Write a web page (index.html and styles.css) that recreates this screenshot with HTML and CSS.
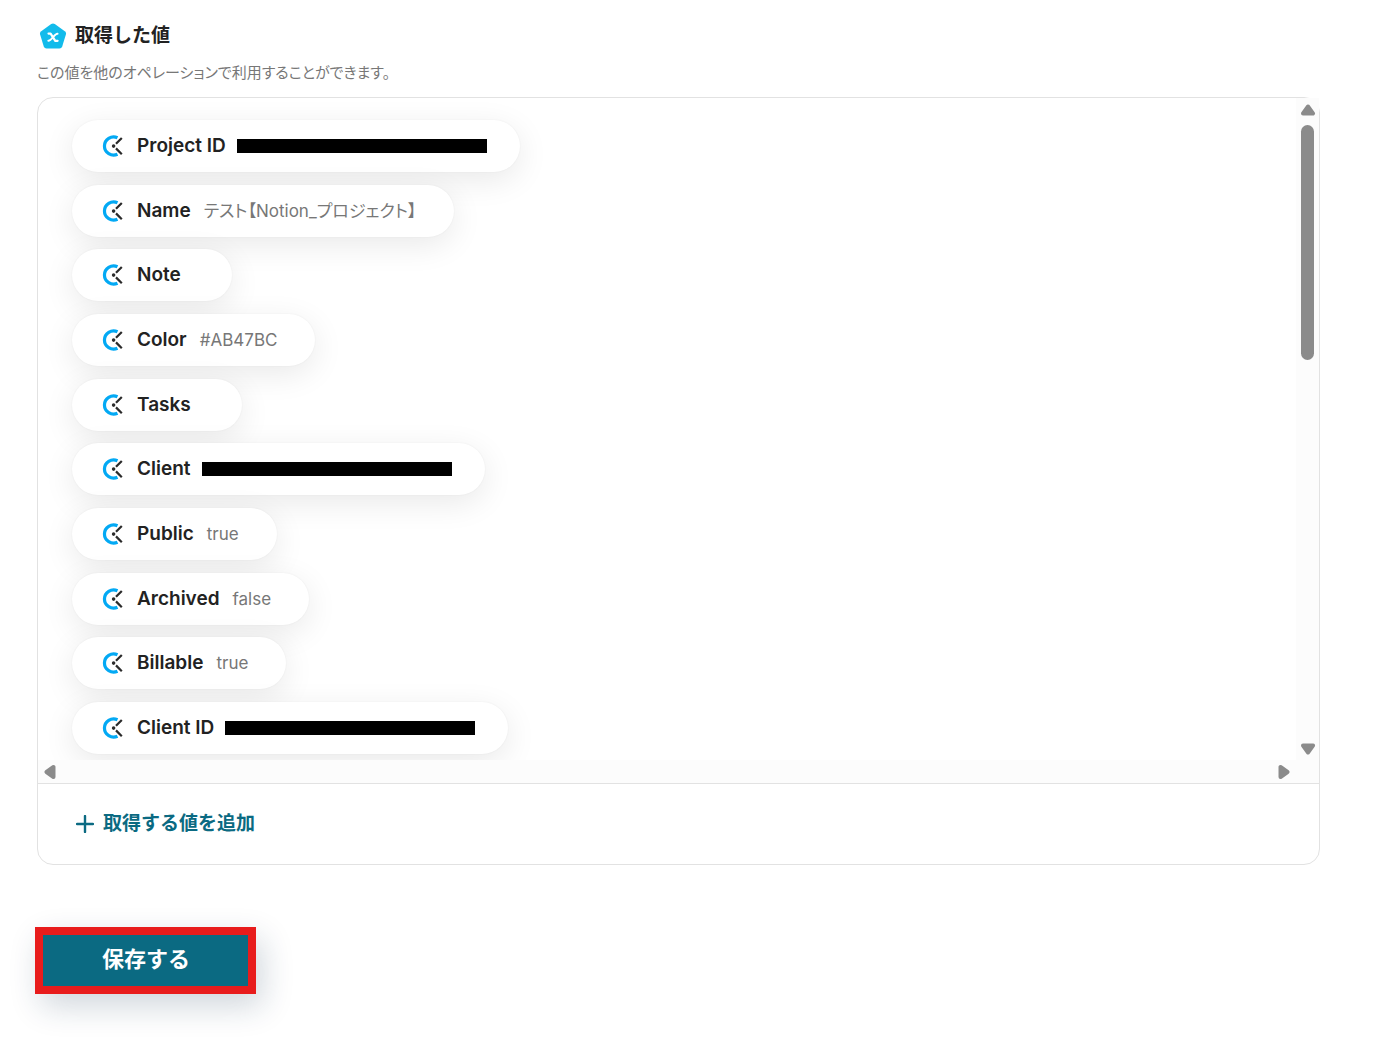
FILE: index.html
```html
<!DOCTYPE html>
<html lang="ja">
<head>
    <meta charset="UTF-8">
    <meta name="viewport" content="width=device-width, initial-scale=1.0">
    <title>取得した値</title>
    <link rel="stylesheet" href="styles.css">
</head>
<body>
    <svg class="symbols" aria-hidden="true">
        <symbol id="clock" viewBox="0 0 22 24">
            <path d="M15.500 3.800A9.100 9.100 0 1 0 15.500 20.200" fill="none" stroke="#03a9f4" stroke-width="3.200"/>
            <path d="M14 9.800L19.800 4M14 14.400L19.800 20.200" fill="none" stroke="#2b2b2b" stroke-width="2.200"/>
            <circle cx="11.600" cy="12.100" r="1.800" fill="#2b2b2b"/>
        </symbol>
    </svg>
    <main class="container">
        <h1 class="title">
            <svg class="title-icon" viewBox="0 0 28 26" aria-hidden="true">
                <path d="M12.2 1Q14 -.2 15.8 1L25.800 8.200Q27.500 9.500 26.900 11.500L23.200 23.600Q22.500 25.500 20.500 25.500H7.500Q5.500 25.500 4.800 23.600L1.100 11.500Q.5 9.500 2.200 8.200Z" fill="#12bbeb"/>
                <path d="M9.500 10.600H11.600L16.300 17.800H18.600" fill="none" stroke="#fff" stroke-width="2.200" stroke-linejoin="round" stroke-linecap="round"/>
                <path d="M18.600 10.800C15.800 10.200 12.300 18.200 9.300 17.700" fill="none" stroke="#fff" stroke-width="1.900" stroke-linecap="round"/>
            </svg>
            取得した値
        </h1>
        <p class="description">この値を他のオペレーションで利用することができます。</p>

        <section class="panel">
            <div class="scroll-area">
                <ul class="values">
                    <li class="pill"><svg class="pill-icon"><use href="#clock"/></svg><span class="name">Project ID</span><span class="value redacted"></span></li>
                    <li class="pill"><svg class="pill-icon"><use href="#clock"/></svg><span class="name">Name</span><span class="value">テスト【Notion_プロジェクト】</span></li>
                    <li class="pill"><svg class="pill-icon"><use href="#clock"/></svg><span class="name">Note</span><span class="value"></span></li>
                    <li class="pill"><svg class="pill-icon"><use href="#clock"/></svg><span class="name">Color</span><span class="value">#AB47BC</span></li>
                    <li class="pill"><svg class="pill-icon"><use href="#clock"/></svg><span class="name">Tasks</span><span class="value"></span></li>
                    <li class="pill"><svg class="pill-icon"><use href="#clock"/></svg><span class="name">Client</span><span class="value redacted"></span></li>
                    <li class="pill"><svg class="pill-icon"><use href="#clock"/></svg><span class="name">Public</span><span class="value">true</span></li>
                    <li class="pill"><svg class="pill-icon"><use href="#clock"/></svg><span class="name">Archived</span><span class="value">false</span></li>
                    <li class="pill"><svg class="pill-icon"><use href="#clock"/></svg><span class="name">Billable</span><span class="value">true</span></li>
                    <li class="pill"><svg class="pill-icon"><use href="#clock"/></svg><span class="name">Client ID</span><span class="value redacted"></span></li>
                </ul>
                <div class="scrollbar vertical">
                    <svg class="arrow" viewBox="0 0 16 12"><path d="M8 2.500L13 9.500H3Z"/></svg>
                    <div class="thumb"></div>
                    <svg class="arrow" viewBox="0 0 16 12"><path d="M8 9.500L13 2.500H3Z"/></svg>
                </div>
                <div class="scrollbar horizontal">
                    <svg class="arrow-side" viewBox="0 0 12 16"><path d="M2.500 8L9.500 3V13Z"/></svg>
                    <svg class="arrow-side" viewBox="0 0 12 16"><path d="M9.500 8L2.500 3V13Z"/></svg>
                </div>
                <div class="scrollbar"></div>
            </div>
            <div class="panel-footer">
                <button type="button" class="add-button">
                    <svg class="plus" viewBox="0 0 18 18" aria-hidden="true"><path d="M9 1V17M1 9H17" stroke="currentColor" stroke-width="2.400" stroke-linecap="round"/></svg>
                    取得する値を追加
                </button>
            </div>
        </section>

        <button type="submit" class="save-button">保存する</button>
    </main>
</body>
</html>
```
FILE: styles.css
```css
* {
    box-sizing: border-box;
}
body {
    margin: 0;
    background-color: #fff;
    color: #222;
    font-family: Inter, "Noto Sans CJK JP", sans-serif;
}
button {
    font-family: inherit;
    cursor: pointer;
}
.symbols {
    display: none;
}
.container {
    padding: 21px 58px 50px 37px;
}
.title {
    display: flex;
    align-items: center;
    gap: 8px;
    margin: 0;
    font-size: 19px;
    font-weight: 600;
    line-height: 30px;
}
.title-icon {
    width: 28px;
    height: 26px;
    margin-left: 2px;
}
.description {
    margin: 9px 0 12px;
    color: #777;
    font-size: 15px;
    line-height: 25px;
    font-feature-settings: "palt";
}
.panel {
    border: 1px solid #e2e2e2;
    border-radius: 16px;
}
.scroll-area {
    display: grid;
    grid-template-columns: 1fr 23px;
    grid-template-rows: 662px 23px;
    border-bottom: 1px solid #e2e2e2;
}
.values {
    display: flex;
    flex-direction: column;
    justify-content: space-between;
    align-items: flex-start;
    margin: 0;
    padding: 22px 34px 6px;
    border-top-left-radius: 15px;
    overflow: hidden;
    list-style: none;
}
.pill {
    display: flex;
    align-items: center;
    height: 52px;
    padding: 0 38px 0 30px;
    border-radius: 26px;
    background-color: #fff;
    box-shadow: 0 8px 32px rgba(0, 0, 0, 0.09), 0 0 2px rgba(0, 0, 0, 0.06);
    line-height: 24px;
}
.pill-icon {
    width: 22px;
    height: 24px;
    margin-right: 13px;
}
.name {
    margin-right: 13px;
    font-size: 19px;
    font-weight: 600;
}
.value {
    color: #777;
    font-size: 17px;
    font-feature-settings: "palt";
}
.redacted {
    position: relative;
    width: 243px;
    height: 14px;
}
.redacted::before {
    content: "";
    position: absolute;
    top: 0;
    left: -2px;
    width: 250px;
    height: 14px;
    background-color: #000;
}
.scrollbar {
    display: flex;
    align-items: center;
    background-color: #fcfcfc;
}
.vertical {
    flex-direction: column;
    padding: 6px 0 5px;
}
.horizontal {
    justify-content: space-between;
    padding: 0 6px;
}
.thumb {
    width: 13px;
    height: 235px;
    margin: 9px 0 auto;
    border-radius: 7px;
    background-color: #8b8b8b;
}
.arrow {
    width: 16px;
    height: 12px;
}
.arrow-side {
    width: 12px;
    height: 16px;
}
.arrow path,
.arrow-side path {
    fill: #8b8b8b;
    stroke: #8b8b8b;
    stroke-width: 4;
    stroke-linejoin: round;
}
.panel-footer {
    padding: 24px 38px 25px;
}
.add-button {
    display: flex;
    align-items: center;
    gap: 9px;
    padding: 0;
    border: none;
    background: none;
    color: #0b6a82;
    font-size: 19px;
    font-weight: 600;
    line-height: 31px;
}
.plus {
    width: 18px;
    height: 18px;
}
.save-button {
    display: block;
    margin: 62px 0 0 -2px;
    padding: 8px 58px 11px 59px;
    border: 8px solid #e81c1c;
    background-color: #0b6a82;
    box-shadow: 6px 12px 32px rgba(20, 50, 80, 0.2);
    color: #fff;
    font-size: 22px;
    font-weight: 700;
    line-height: 32px;
}
```
